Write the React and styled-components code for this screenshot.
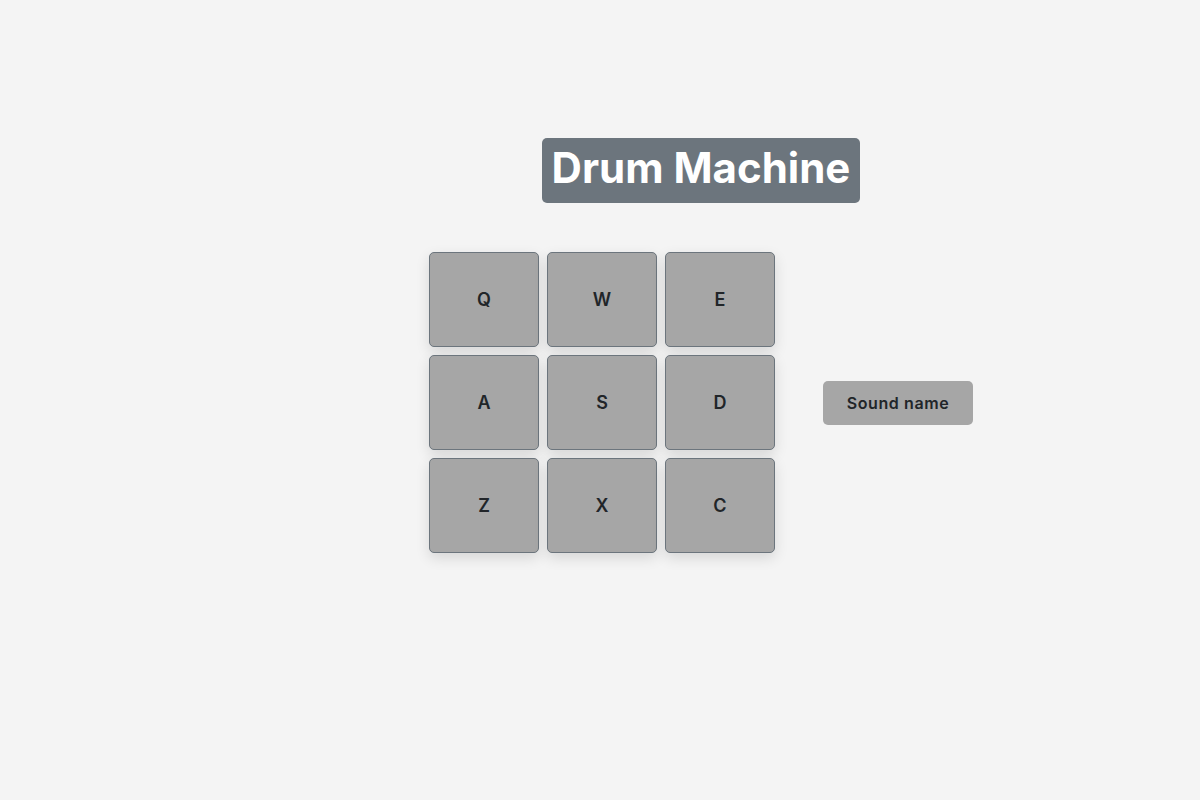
import styled, { createGlobalStyle } from 'styled-components';

const GlobalStyle = createGlobalStyle`
  html, body {
    margin: 0;
    padding: 0;
    background: #f4f4f4;
    font-family: Inter, "Noto Sans", sans-serif;
  }
`;

const Page = styled.main`
  min-height: 800px;
  box-sizing: border-box;
  padding: 138px 0 0 202px;
  display: flex;
  flex-direction: column;
  align-items: center;
`;

const Title = styled.h1`
  margin: 0 0 49px;
  width: 318px;
  height: 65px;
  box-sizing: border-box;
  padding-bottom: 6px;
  display: flex;
  align-items: center;
  justify-content: center;
  background: #6c757d;
  color: #ffffff;
  border-radius: 5px;
  font-size: 42px;
  font-weight: 700;
`;

const Machine = styled.div`
  display: flex;
  align-items: center;
  gap: 48px;
`;

const PadGrid = styled.div`
  display: grid;
  grid-template-columns: repeat(3, 110px);
  grid-auto-rows: 95px;
  gap: 8px;
`;

const Pad = styled.button`
  box-sizing: border-box;
  background: #a6a6a6;
  border: 1px solid #6c757d;
  border-radius: 5px;
  box-shadow: 0 5px 14px rgba(0, 0, 0, 0.12);
  color: #212529;
  font-family: inherit;
  font-size: 18px;
  font-weight: 600;
  padding: 0;
  cursor: pointer;
`;

const Display = styled.div`
  width: 150px;
  height: 44px;
  display: flex;
  align-items: center;
  justify-content: center;
  background: #a6a6a6;
  border-radius: 5px;
  color: #212529;
  font-size: 16px;
  font-weight: 600;
  letter-spacing: 0.6px;
`;

const KEYS = ['Q', 'W', 'E', 'A', 'S', 'D', 'Z', 'X', 'C'];

export default function App() {
  return (
    <>
      <GlobalStyle />
      <Page>
        <Title>Drum Machine</Title>
        <Machine>
          <PadGrid>
            {KEYS.map((key) => (
              <Pad key={key}>{key}</Pad>
            ))}
          </PadGrid>
          <Display>Sound name</Display>
        </Machine>
      </Page>
    </>
  );
}
